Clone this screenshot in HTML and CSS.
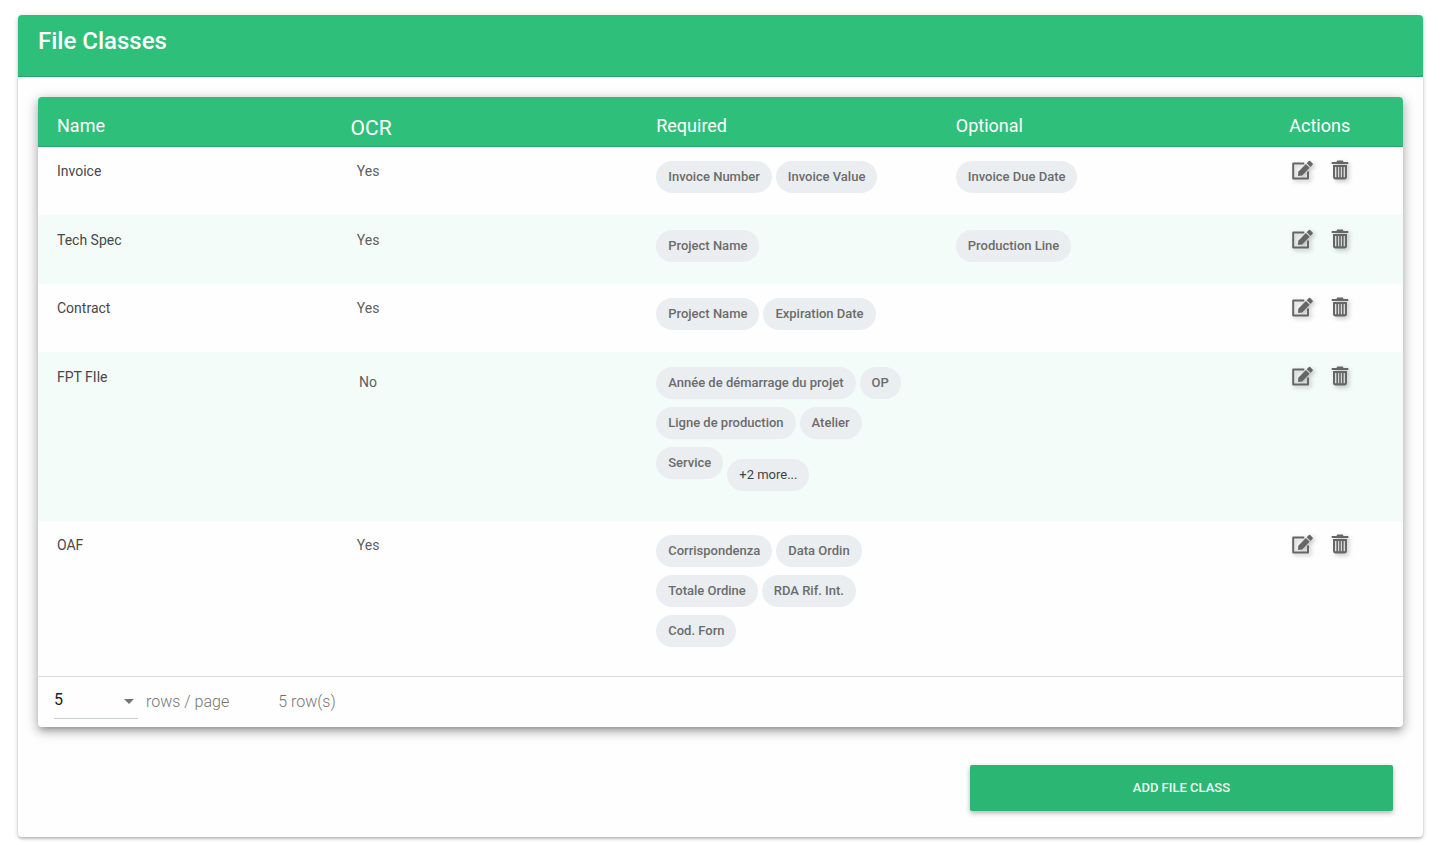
FILE: index.html
```html
<!DOCTYPE html>
<html lang="en">
<head>
<meta charset="utf-8">
<title>File Classes</title>
<link rel="stylesheet" href="styles.css">
</head>
<body>
<svg class="sprite" aria-hidden="true">
  <symbol id="edit" viewBox="0 0 22 21">
    <path d="M13.3 3.6H2.2V18.4H17V11.5" fill="none" stroke="currentColor" stroke-width="2" stroke-linejoin="round"/>
    <path d="M7 16L7.3 11.8L14.9 4L18.7 7.8L11.2 15.4Z"/>
    <path d="M15.7 3.2L17.8 1Q18.5.3 19.2 1L21.6 3.4Q22.2 4.2 21.6 4.8L19.5 7Z"/>
  </symbol>
  <symbol id="trash" viewBox="0 0 18 21">
    <path d="M.7 1.9H5.4L6.3.6H11.7L12.6 1.9H17.3V3.9H.7Z"/>
    <path fill-rule="evenodd" d="M2 5.1H16V17.3Q16 19.4 13.8 19.4H4.2Q2 19.4 2 17.3ZM4 7V17.3H5.4V7ZM7 7V17.3H8.2V7ZM9.8 7V17.3H11V7ZM12.6 7V17.3H14V7Z"/>
  </symbol>
</svg>
<main class="card">
  <header class="card-header"><h1>File Classes</h1></header>
  <div class="card-body">
    <section class="panel">
      <table class="classes">
        <colgroup><col class="col-wide"><col class="col-wide"><col class="col-wide"><col class="col-wide"><col></colgroup>
        <thead>
          <tr><th scope="col">Name</th><th scope="col" class="ocr">OCR</th><th scope="col">Required</th><th scope="col">Optional</th><th scope="col" class="actions">Actions</th></tr>
        </thead>
        <tbody>
          <tr>
            <td>Invoice</td><td class="ocr"><span>Yes</span></td>
            <td><div class="chips"><span class="chip">Invoice Number</span><span class="chip">Invoice Value</span></div></td>
            <td><div class="chips"><span class="chip">Invoice Due Date</span></div></td>
            <td class="actions"><div class="buttons"><button type="button" aria-label="Edit Invoice"><svg width="22" height="21"><use href="#edit"/></svg></button><button type="button" aria-label="Delete Invoice"><svg width="18" height="21"><use href="#trash"/></svg></button></div></td>
          </tr>
          <tr>
            <td>Tech Spec</td><td class="ocr"><span>Yes</span></td>
            <td><div class="chips"><span class="chip">Project Name</span></div></td>
            <td><div class="chips"><span class="chip">Production Line</span></div></td>
            <td class="actions"><div class="buttons"><button type="button" aria-label="Edit Tech Spec"><svg width="22" height="21"><use href="#edit"/></svg></button><button type="button" aria-label="Delete Tech Spec"><svg width="18" height="21"><use href="#trash"/></svg></button></div></td>
          </tr>
          <tr>
            <td>Contract</td><td class="ocr"><span>Yes</span></td>
            <td><div class="chips"><span class="chip">Project Name</span><span class="chip">Expiration Date</span></div></td>
            <td></td>
            <td class="actions"><div class="buttons"><button type="button" aria-label="Edit Contract"><svg width="22" height="21"><use href="#edit"/></svg></button><button type="button" aria-label="Delete Contract"><svg width="18" height="21"><use href="#trash"/></svg></button></div></td>
          </tr>
          <tr>
            <td>FPT FIle</td><td class="ocr ocr-off"><span>No</span></td>
            <td><div class="chips"><span class="chip">Année de démarrage du projet</span><span class="chip">OP</span><span class="chip">Ligne de production</span><span class="chip">Atelier</span><span class="chip">Service</span><button type="button" class="chip more">+2 more...</button></div></td>
            <td></td>
            <td class="actions"><div class="buttons"><button type="button" aria-label="Edit FPT FIle"><svg width="22" height="21"><use href="#edit"/></svg></button><button type="button" aria-label="Delete FPT FIle"><svg width="18" height="21"><use href="#trash"/></svg></button></div></td>
          </tr>
          <tr>
            <td>OAF</td><td class="ocr"><span>Yes</span></td>
            <td><div class="chips"><span class="chip">Corrispondenza</span><span class="chip">Data Ordin</span><span class="chip">Totale Ordine</span><span class="chip">RDA Rif. Int.</span><span class="chip">Cod. Forn</span></div></td>
            <td></td>
            <td class="actions"><div class="buttons"><button type="button" aria-label="Edit OAF"><svg width="22" height="21"><use href="#edit"/></svg></button><button type="button" aria-label="Delete OAF"><svg width="18" height="21"><use href="#trash"/></svg></button></div></td>
          </tr>
        </tbody>
      </table>
      <footer class="pager">
        <div class="select">
          <select id="page-size"><option>5</option><option>10</option><option>25</option></select>
          <svg width="10" height="5" viewBox="0 0 10 5" aria-hidden="true"><path d="M0 0H10L5 5Z"/></svg>
        </div>
        <label for="page-size">rows / page</label>
        <span class="count">5 row(s)</span>
      </footer>
    </section>
    <button type="button" class="add">ADD FILE CLASS</button>
  </div>
</main>
</body>
</html>
```
FILE: styles.css
```css
* { box-sizing: border-box; }
body {
  margin: 0;
  padding: 15px 24px 8px 18px;
  background: #fff;
  color: #484848;
  font: 14px/20px Roboto, sans-serif;
}
button, select { font: inherit; color: inherit; border: 0; padding: 0; background: none; cursor: pointer; }
.sprite { display: none; }

.card {
  border-radius: 4px;
  background: #fefefe;
  box-shadow: 0 1px 5px rgba(0, 0, 0, .2), 0 2px 2px rgba(0, 0, 0, .14);
}
.card-header {
  height: 62px;
  padding: 10px 20px;
  border-bottom: 1px solid #27a567;
  border-radius: 4px 4px 0 0;
  background: #2ec07a;
  color: #fff;
}
h1 { margin: 0; font-size: 24px; line-height: 32px; font-weight: 500; }
.card-body { display: flex; flex-direction: column; padding: 20px 20px 26px; }

.panel {
  border-radius: 4px;
  background: #fefefe;
  box-shadow: 0 5px 5px -3px rgba(0, 0, 0, .2), 0 4px 10px 1px rgba(0, 0, 0, .2), 0 3px 14px 2px rgba(0, 0, 0, .12);
}
.classes { width: 100%; border-collapse: separate; border-spacing: 0; table-layout: fixed; }
.col-wide { width: 21.95%; }
th {
  height: 50px;
  padding: 8px 19px 0;
  border-bottom: 1px solid #27a567;
  background: #2ec07a;
  color: #fff;
  font-size: 18px;
  font-weight: 400;
  text-align: left;
}
th:first-child { border-top-left-radius: 4px; }
th:last-child { border-top-right-radius: 4px; }
td { height: 68px; padding: 14px 19px; vertical-align: top; }
tbody tr:nth-child(even) td { height: 69px; padding-top: 15px; background: #f3fcf9; }
tbody tr:nth-child(4) td { padding-bottom: 30px; }
tbody tr:last-child td { padding-bottom: 29px; }
.ocr { padding-left: 13px; color: #5f5f5f; }
th.ocr { padding-top: 12px; color: #fff; font-size: 21px; }
td.ocr span { display: block; width: 35px; text-align: center; }
tbody tr:nth-child(4) td.ocr-off { padding-top: 20px; }
.chips { display: flex; flex-wrap: wrap; align-items: flex-start; gap: 8px 4px; }
.chip {
  height: 32px;
  padding: 0 12px;
  border-radius: 16px;
  background: #ebeef1;
  color: #6c6c6c;
  font-size: 13px;
  line-height: 32px;
  font-weight: 500;
}
.chips .more { margin-top: 12px; font-weight: 400; color: #444; }
.actions { padding-left: 0; padding-right: 0; text-align: center; }
td.actions, tbody tr:nth-child(n) td.actions { padding-top: 13px; }
tbody tr:nth-child(even) td.actions { padding-top: 14px; }
.buttons { display: flex; justify-content: center; gap: 18px; }
.buttons button { display: flex; color: #666; }
.buttons svg { fill: currentColor; filter: drop-shadow(2px 2px 2px rgba(0, 0, 0, .25)); }

.pager {
  display: flex;
  height: 51px;
  align-items: center;
  padding: 0 16px;
  border-top: 1px solid #ddd;
  color: #757575;
  font-size: 16px;
  font-weight: 300;
}
.select { position: relative; width: 84px; height: 34px; margin-right: 8px; border-bottom: 1px solid #c5d0da; }
.select select { width: 100%; height: 30px; appearance: none; color: #222; font-weight: 400; outline: 0; }
.select svg { position: absolute; right: 4px; top: 14px; fill: #757575; pointer-events: none; }
.count { margin-left: 49px; }

.add {
  align-self: flex-end;
  width: 31%;
  height: 46px;
  margin: 38px 10px 0 0;
  border-radius: 2px;
  background: #2bb673;
  box-shadow: 0 2px 5px rgba(0, 0, 0, .3);
  color: #effaf4;
  font-size: 13px;
  font-weight: 500;
}
```
